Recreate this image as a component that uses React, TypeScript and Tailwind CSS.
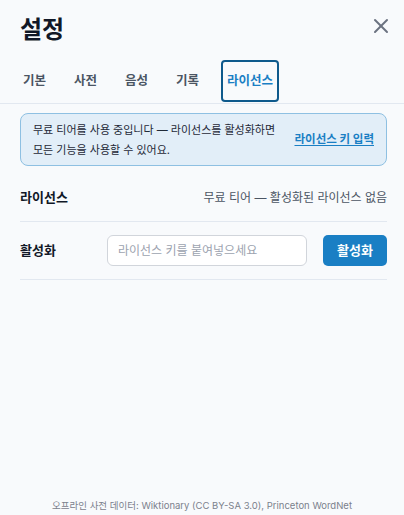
import React, { useState } from "react";
import { X } from "lucide-react";

const tabs = ["기본", "사전", "음성", "기록", "라이선스"];

export default function App() {
  const [active, setActive] = useState("라이선스");
  const [key, setKey] = useState("");

  return (
    <div
      className="w-[404px] h-[515px] bg-[#f8fafc] flex flex-col text-[#1f2937] overflow-hidden"
      style={{ fontFamily: 'Inter, "Noto Sans CJK KR", sans-serif' }}
    >
      <div className="flex items-center justify-between pl-5 pr-[11px] pt-[10px] h-[50px]">
        <h1 className="text-[24px] font-bold text-[#111827] leading-none">설정</h1>
        <button className="text-[#6b7280] mb-2">
          <X className="w-6 h-6" strokeWidth={2} />
        </button>
      </div>

      <div className="flex items-end px-[17px] gap-4 border-b border-[#e2e8f0] h-[54px] pb-[1px]">
        {tabs.map((t) => (
          <button
            key={t}
            onClick={() => setActive(t)}
            className={
              t === active
                ? "h-[42px] px-[4px] text-[12.5px] font-bold text-[#1a7fc4] border-2 border-[#0e5a8c] rounded-[4px]"
                : "h-[42px] px-[4px] text-[12.5px] font-bold text-[#4b5563] border-2 border-transparent"
            }
          >
            {t}
          </button>
        ))}
      </div>

      <div className="pl-5 pr-[17px] pt-[9px]">
        <div className="flex items-center justify-between bg-[#e2eef8] border border-[#8ec0e2] rounded-[8px] pl-3 pr-3 h-[53px]">
          <p className="text-[11px] leading-[20px] text-[#1f2937] whitespace-nowrap">
            무료 티어를 사용 중입니다 — 라이선스를 활성화하면
            <br />
            모든 기능을 사용할 수 있어요.
          </p>
          <a className="text-[11.5px] font-bold text-[#1a7fc4] underline underline-offset-2 whitespace-nowrap cursor-pointer">
            라이선스 키 입력
          </a>
        </div>

        <div className="flex items-center justify-between h-[56px] border-b border-[#e2e8f0] pt-[8px]">
          <span className="text-[13px] font-bold text-[#111827]">라이선스</span>
          <span className="text-[12px] text-[#4b5563]">무료 티어 — 활성화된 라이선스 없음</span>
        </div>

        <div className="flex items-center h-[58px] border-b border-[#e2e8f0]">
          <span className="w-[87px] text-[13px] font-bold text-[#111827]">활성화</span>
          <input
            value={key}
            onChange={(e) => setKey(e.target.value)}
            placeholder="라이선스 키를 붙여넣으세요"
            className="w-[200px] h-[31px] px-[10px] text-[12px] bg-white border border-[#d1d5db] rounded-[6px] placeholder:text-[#9ca3af] outline-none"
          />
          <button className="ml-auto h-[31px] w-[64px] bg-[#1a7fc4] text-white text-[13px] font-bold rounded-[5px]">
            활성화
          </button>
        </div>
      </div>

      <div className="mt-auto pb-[2px] text-center text-[9.5px] text-[#7b818c]">
        오프라인 사전 데이터: Wiktionary (CC BY-SA 3.0), Princeton WordNet
      </div>
    </div>
  );
}
